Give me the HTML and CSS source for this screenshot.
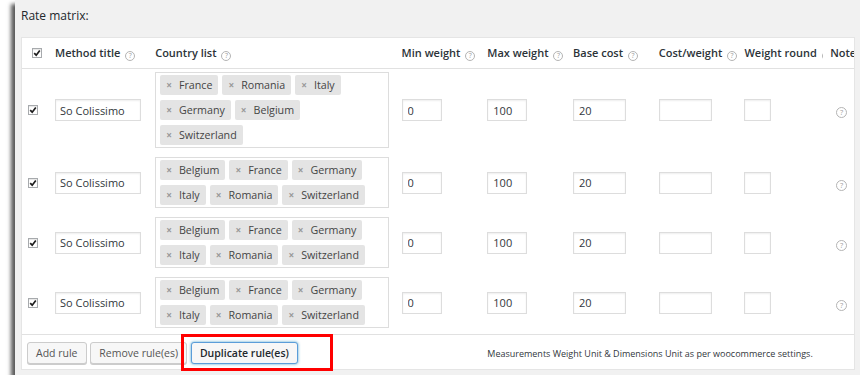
FILE: index.html
```html
<!DOCTYPE html>
<html lang="en">
<head>
  <meta charset="UTF-8">
  <title>Rate matrix</title>
  <link rel="stylesheet" href="styles.css">
</head>
<body>
  <div class="panel">
    <h3 class="panel-title">Rate matrix:</h3>
    <div class="matrix-wrap">
      <table class="matrix">
        <colgroup>
          <col class="c-check">
          <col class="c-title">
          <col class="c-country">
          <col class="c-num"><col class="c-num"><col class="c-num"><col class="c-num"><col class="c-num"><col class="c-num">
        </colgroup>
        <thead>
          <tr>
            <th class="check-head"><span class="cb"><svg viewBox="0 0 10 10"><path d="M2.2 5.2 L4.2 7.2 L7.8 2.6"/></svg></span></th>
            <th>Method title <span class="help">?</span></th>
            <th>Country list <span class="help">?</span></th>
            <th>Min weight <span class="help">?</span></th>
            <th>Max weight <span class="help">?</span></th>
            <th>Base cost <span class="help">?</span></th>
            <th>Cost/weight <span class="help">?</span></th>
            <th>Weight round <span class="help">?</span></th>
            <th>Note <span class="help">?</span></th>
          </tr>
        </thead>
        <tbody>
          <tr>
            <td class="check-cell"><span class="cb"><svg viewBox="0 0 10 10"><path d="M2.2 5.2 L4.2 7.2 L7.8 2.6"/></svg></span></td>
            <td><input class="field field-title" type="text" value="So Colissimo"></td>
            <td>
              <div class="tag-box">
                <span class="tag"><i>×</i>France</span>
                <span class="tag"><i>×</i>Romania</span>
                <span class="tag"><i>×</i>Italy</span>
                <span class="tag"><i>×</i>Germany</span>
                <span class="tag"><i>×</i>Belgium</span>
                <span class="tag"><i>×</i>Switzerland</span>
              </div>
            </td>
            <td><input class="field field-sm" type="text" value="0"></td>
            <td><input class="field field-sm" type="text" value="100"></td>
            <td><input class="field field-md" type="text" value="20"></td>
            <td><input class="field field-md" type="text" value=""></td>
            <td><input class="field field-xs" type="text" value=""></td>
            <td class="note-cell"><span class="help">?</span></td>
          </tr>
          <tr>
            <td class="check-cell"><span class="cb"><svg viewBox="0 0 10 10"><path d="M2.2 5.2 L4.2 7.2 L7.8 2.6"/></svg></span></td>
            <td><input class="field field-title" type="text" value="So Colissimo"></td>
            <td>
              <div class="tag-box">
                <span class="tag"><i>×</i>Belgium</span>
                <span class="tag"><i>×</i>France</span>
                <span class="tag"><i>×</i>Germany</span>
                <span class="tag"><i>×</i>Italy</span>
                <span class="tag"><i>×</i>Romania</span>
                <span class="tag"><i>×</i>Switzerland</span>
              </div>
            </td>
            <td><input class="field field-sm" type="text" value="0"></td>
            <td><input class="field field-sm" type="text" value="100"></td>
            <td><input class="field field-md" type="text" value="20"></td>
            <td><input class="field field-md" type="text" value=""></td>
            <td><input class="field field-xs" type="text" value=""></td>
            <td class="note-cell"><span class="help">?</span></td>
          </tr>
          <tr>
            <td class="check-cell"><span class="cb"><svg viewBox="0 0 10 10"><path d="M2.2 5.2 L4.2 7.2 L7.8 2.6"/></svg></span></td>
            <td><input class="field field-title" type="text" value="So Colissimo"></td>
            <td>
              <div class="tag-box">
                <span class="tag"><i>×</i>Belgium</span>
                <span class="tag"><i>×</i>France</span>
                <span class="tag"><i>×</i>Germany</span>
                <span class="tag"><i>×</i>Italy</span>
                <span class="tag"><i>×</i>Romania</span>
                <span class="tag"><i>×</i>Switzerland</span>
              </div>
            </td>
            <td><input class="field field-sm" type="text" value="0"></td>
            <td><input class="field field-sm" type="text" value="100"></td>
            <td><input class="field field-md" type="text" value="20"></td>
            <td><input class="field field-md" type="text" value=""></td>
            <td><input class="field field-xs" type="text" value=""></td>
            <td class="note-cell"><span class="help">?</span></td>
          </tr>
          <tr>
            <td class="check-cell"><span class="cb"><svg viewBox="0 0 10 10"><path d="M2.2 5.2 L4.2 7.2 L7.8 2.6"/></svg></span></td>
            <td><input class="field field-title" type="text" value="So Colissimo"></td>
            <td>
              <div class="tag-box">
                <span class="tag"><i>×</i>Belgium</span>
                <span class="tag"><i>×</i>France</span>
                <span class="tag"><i>×</i>Germany</span>
                <span class="tag"><i>×</i>Italy</span>
                <span class="tag"><i>×</i>Romania</span>
                <span class="tag"><i>×</i>Switzerland</span>
              </div>
            </td>
            <td><input class="field field-sm" type="text" value="0"></td>
            <td><input class="field field-sm" type="text" value="100"></td>
            <td><input class="field field-md" type="text" value="20"></td>
            <td><input class="field field-md" type="text" value=""></td>
            <td><input class="field field-xs" type="text" value=""></td>
            <td class="note-cell"><span class="help">?</span></td>
          </tr>
        </tbody>
        <tfoot>
          <tr>
            <td colspan="4" class="actions">
              <button class="btn">Add rule</button>
              <button class="btn">Remove rule(es)</button>
              <button class="btn btn-focus">Duplicate rule(es)</button>
            </td>
            <td colspan="5" class="units-note">Measurements Weight Unit &amp; Dimensions Unit as per woocommerce settings.</td>
          </tr>
        </tfoot>
      </table>
    </div>
    <div class="callout"></div>
  </div>
</body>
</html>
```

FILE: styles.css
```css
body {
  margin: 0;
  background-color: #fff;
  font-family: "Open Sans", "Liberation Sans", sans-serif;
  color: #32373c;
}

.panel {
  position: relative;
  height: 375px;
  margin-left: 15px;
  padding: 0 0 0 6px;
  box-sizing: border-box;
  background-color: #f1f1f1;
  box-shadow: -4px 4px 4px rgba(0, 0, 0, 0.65);
}

.panel-title {
  margin: 0;
  padding-top: 8px;
  font-size: 12px;
  line-height: 16px;
  font-weight: 400;
  color: #23282d;
}

.matrix-wrap {
  width: 834px;
  height: 333px;
  margin-top: 13px;
  box-sizing: border-box;
  border: 1px solid #e5e5e5;
  background-color: #fff;
  overflow: hidden;
}

.matrix {
  width: 887px;
  table-layout: fixed;
  border-collapse: collapse;
}

.c-check { width: 26px; }
.c-title { width: 100px; }
.c-country { width: 246px; }
.c-num { width: 85.6px; }

.matrix th {
  height: 30px;
  padding: 0 7px;
  border-bottom: 1px solid #e1e1e1;
  text-align: left;
  font-size: 11px;
  font-weight: 600;
  color: #2c3338;
  white-space: nowrap;
  overflow: hidden;
}

.matrix td {
  padding: 3px 7px 6px;
  vertical-align: middle;
  font-size: 11px;
}

.matrix .check-head {
  padding-left: 10px;
}

.matrix .check-cell {
  padding-left: 6px;
}

.cb {
  display: block;
  width: 10px;
  height: 10px;
  box-sizing: border-box;
  border: 1px solid #a7aaad;
  background-color: #fff;
  box-shadow: inset 0 1px 1px rgba(0, 0, 0, 0.1);
}

.cb svg {
  display: block;
  width: 10px;
  height: 10px;
  margin: -1px 0 0 -1px;
}

.cb path {
  fill: none;
  stroke: #1e1e1e;
  stroke-width: 1.7;
}

.help {
  display: inline-block;
  width: 10px;
  height: 10px;
  margin-left: 2px;
  box-sizing: border-box;
  border: 1px solid #b4b4b4;
  border-radius: 50%;
  font-size: 7px;
  line-height: 8px;
  font-weight: 400;
  text-align: center;
  color: #a0a0a0;
  vertical-align: -1px;
}

.field {
  display: block;
  height: 22px;
  padding: 0 4px;
  box-sizing: border-box;
  border: 1px solid #ddd;
  box-shadow: inset 0 1px 2px rgba(0, 0, 0, 0.07);
  background-color: #fff;
  font-family: "Open Sans", "Liberation Sans", sans-serif;
  font-size: 11px;
  color: #32373c;
}

.field-title { width: 86px; }
.field-sm { width: 40px; padding-left: 5px; }
.field-md { width: 53px; padding-left: 5px; }
.field-xs { width: 27px; }

.tag-box {
  display: flex;
  flex-wrap: wrap;
  gap: 5px 4px;
  width: 234px;
  padding: 2px 7px 2px 4px;
  box-sizing: border-box;
  border: 1px solid #ddd;
}

.tag {
  display: flex;
  align-items: center;
  height: 20px;
  padding: 0 6px;
  background-color: #e4e4e4;
  border-radius: 2px;
  font-size: 10.7px;
  color: #444;
}

.tag i {
  margin-right: 7px;
  font-style: normal;
  font-weight: 700;
  font-size: 10px;
  color: #999;
}

.matrix .note-cell {
  padding-left: 11px;
}

.matrix .note-cell .help {
  width: 11px;
  height: 11px;
  line-height: 9px;
  font-size: 7.5px;
}

.matrix tfoot td {
  height: 36px;
  padding: 0 6px 0 5px;
  border-top: 1px solid #e1e1e1;
}

.actions {
  white-space: nowrap;
}

.btn {
  height: 22px;
  margin-right: 1px;
  padding: 0 8px;
  border: 1px solid #ccc;
  border-radius: 3px;
  background-color: #f7f7f7;
  box-shadow: 0 1px 0 #ccc;
  font-family: "Open Sans", "Liberation Sans", sans-serif;
  font-size: 10.5px;
  color: #555;
  vertical-align: top;
}

.btn-focus {
  border-color: #5b9dd9;
  box-shadow: 0 0 3px rgba(30, 140, 190, 0.8);
  color: #23282d;
  font-weight: 600;
}

.matrix .units-note {
  padding-left: 7px;
  font-size: 9px;
  color: #32373c;
  white-space: nowrap;
}

.callout {
  position: absolute;
  left: 166px;
  top: 334px;
  width: 152px;
  height: 37px;
  box-sizing: border-box;
  border: 3px solid #f00;
}
```
